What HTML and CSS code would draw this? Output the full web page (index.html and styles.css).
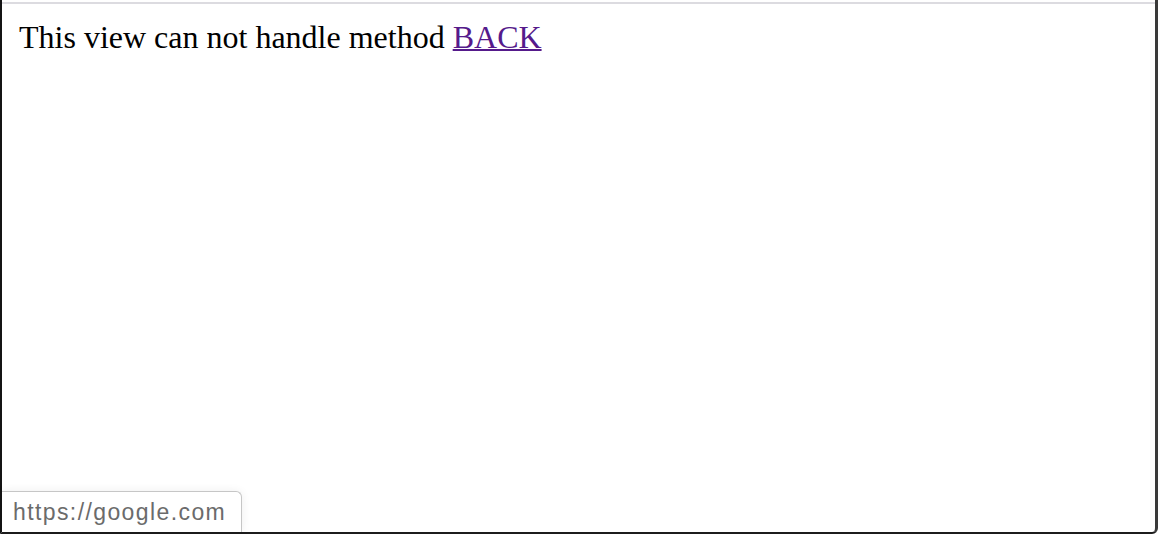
FILE: index.html
```html
<!DOCTYPE html>
<html>
<head>
<meta charset="utf-8">
<link rel="stylesheet" href="styles.css">
</head>
<body>
<div class="frame">
  <div class="topline"></div>
  <div class="page">
    <p class="msg">This view can not handle method <a href="#" class="back">BACK</a></p>
  </div>
  <div class="status">https://google.com</div>
</div>
</body>
</html>
```

FILE: styles.css
```css
html, body {
  margin: 0;
  padding: 0;
  width: 1158px;
  height: 534px;
  overflow: hidden;
  background: #ffffff;
}
.frame {
  position: relative;
  box-sizing: border-box;
  width: 1158px;
  height: 534px;
  border-left: 2px solid #141414;
  border-right: 3px solid #3a3a3a;
  border-bottom: 2px solid #1c1c1c;
  border-bottom-right-radius: 6px;
  background: #ffffff;
  display: flex;
  flex-direction: column;
}
.topline {
  margin-top: 2px;
  height: 2px;
  background: #dcdbe0;
}
.page {
  flex: 1;
  padding: 0 17px;
}
.msg {
  margin: 15px 0 0 0;
  font-family: "Liberation Serif", "Times New Roman", serif;
  font-size: 32px;
  line-height: 37px;
  color: #000000;
}
.back {
  color: #551a8b;
  text-decoration: underline;
  text-decoration-thickness: 2px;
}
.status {
  position: absolute;
  left: 0;
  bottom: 0;
  height: 41px;
  box-sizing: border-box;
  padding: 0 15px 0 11px;
  display: flex;
  align-items: center;
  border: 1px solid #c6c6c6;
  border-left: none;
  border-bottom: none;
  border-top-right-radius: 6px;
  background: #ffffff;
  font-family: "Liberation Sans", Arial, sans-serif;
  font-size: 23px;
  letter-spacing: 1.4px;
  color: #6b6b6b;
  box-shadow: 0 0 10px rgba(0,0,0,0.07);
}
```
